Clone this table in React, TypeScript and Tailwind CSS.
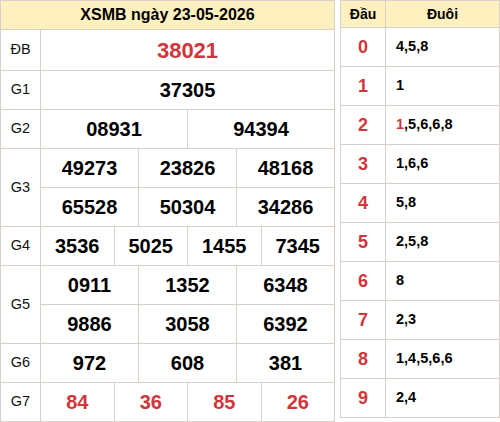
const border = 'border-[#d9d1c9]';

interface PrizeRow {
  label: string;
  rows: string[][];
  red?: boolean;
  big?: boolean;
}

const prizes: PrizeRow[] = [
  { label: 'ĐB', rows: [['38021']], red: true, big: true },
  { label: 'G1', rows: [['37305']] },
  { label: 'G2', rows: [['08931', '94394']] },
  { label: 'G3', rows: [['49273', '23826', '48168'], ['65528', '50304', '34286']] },
  { label: 'G4', rows: [['3536', '5025', '1455', '7345']] },
  { label: 'G5', rows: [['0911', '1352', '6348'], ['9886', '3058', '6392']] },
  { label: 'G6', rows: [['972', '608', '381']] },
  { label: 'G7', rows: [['84', '36', '85', '26']], red: true },
];

const loto: { head: string; tails: string[]; redFirst?: boolean }[] = [
  { head: '0', tails: ['4', '5', '8'] },
  { head: '1', tails: ['1'] },
  { head: '2', tails: ['1', '5', '6', '6', '8'], redFirst: true },
  { head: '3', tails: ['1', '6', '6'] },
  { head: '4', tails: ['5', '8'] },
  { head: '5', tails: ['2', '5', '8'] },
  { head: '6', tails: ['8'] },
  { head: '7', tails: ['2', '3'] },
  { head: '8', tails: ['1', '4', '5', '6', '6'] },
  { head: '9', tails: ['2', '4'] },
];

function rowClass(big: boolean | undefined, last: boolean) {
  if (!last) return `border-b ${border} h-[39px]`;
  return big ? 'h-[40px]' : 'h-[38px]';
}

function ResultTable() {
  return (
    <div className={`w-[335px] shrink-0 border-l border-t ${border}`}>
      <div className={`h-[29px] flex items-center justify-center bg-[#fff1bf] border-b border-r ${border} text-[16px] font-bold text-black`}>
        XSMB ngày 23-05-2026
      </div>
      {prizes.map((p) => (
        <div key={p.label} className={`flex border-b ${border}`}>
          <div className={`w-[40px] shrink-0 flex items-center justify-center border-r ${border} text-[14.5px] text-[#111]`}>
            {p.label}
          </div>
          <div className="flex-1 flex flex-col">
            {p.rows.map((row, ri) => (
              <div key={ri} className={`flex ${rowClass(p.big, ri === p.rows.length - 1)}`}>
                {row.map((n, ci) => (
                  <div
                    key={ci}
                    className={`flex-1 flex items-center justify-center border-r ${border} font-bold ${p.big ? 'text-[22px]' : 'text-[20px]'} ${p.red ? 'text-[#d0363b]' : 'text-black'}`}
                  >
                    {n}
                  </div>
                ))}
              </div>
            ))}
          </div>
        </div>
      ))}
    </div>
  );
}

function LotoTable() {
  return (
    <div className={`w-[160px] shrink-0 self-start border-l border-t ${border}`}>
      <div className={`flex h-[27px] bg-[#fff1bf] border-b ${border} text-[14px] font-bold text-black`}>
        <div className={`w-[45px] flex items-center justify-center border-r ${border}`}>Đầu</div>
        <div className={`flex-1 flex items-center justify-center border-r ${border}`}>Đuôi</div>
      </div>
      {loto.map((r) => (
        <div key={r.head} className={`flex h-[39px] border-b ${border}`}>
          <div className={`w-[45px] flex items-center justify-center border-r ${border} text-[18px] font-bold text-[#d0363b]`}>
            {r.head}
          </div>
          <div className={`flex-1 flex items-center pl-[10px] border-r ${border} text-[14.5px] font-bold text-black`}>
            {r.tails.map((t, i) => (
              <span key={i}>
                {i > 0 && ','}
                <span className={r.redFirst && i === 0 ? 'text-[#d0363b]' : ''}>{t}</span>
              </span>
            ))}
          </div>
        </div>
      ))}
    </div>
  );
}

export default function App() {
  return (
    <div
      className="w-[500px] h-[422px] bg-white flex gap-[5px] overflow-hidden"
      style={{ fontFamily: '"Liberation Sans", Arial, sans-serif' }}
    >
      <ResultTable />
      <LotoTable />
    </div>
  );
}
